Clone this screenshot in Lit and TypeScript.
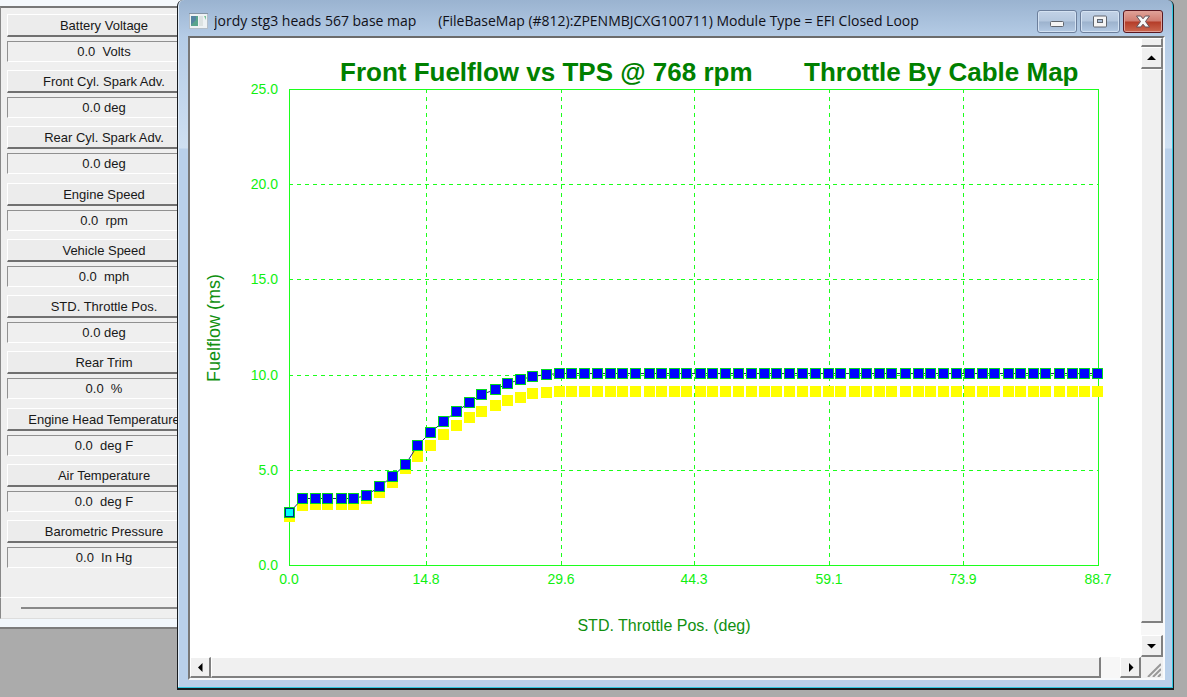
import { LitElement, html, css, svg } from "lit";
import { customElement, property } from "lit/decorators.js";

interface Reading {
  name: string;
  value: string;
}

const READINGS: Reading[] = [
  { name: "Battery Voltage", value: "0.0  Volts" },
  { name: "Front Cyl. Spark Adv.", value: "0.0 deg" },
  { name: "Rear Cyl. Spark Adv.", value: "0.0 deg" },
  { name: "Engine Speed", value: "0.0  rpm" },
  { name: "Vehicle Speed", value: "0.0  mph" },
  { name: "STD. Throttle Pos.", value: "0.0 deg" },
  { name: "Rear Trim", value: "0.0  %" },
  { name: "Engine Head Temperature", value: "0.0  deg F" },
  { name: "Air Temperature", value: "0.0  deg F" },
  { name: "Barometric Pressure", value: "0.0  In Hg" },
];

const POINTS = 64;
const fill = (values: number[]) =>
  Array.from({ length: POINTS }, (_, i) => values[Math.min(i, values.length - 1)]);

const CURRENT = fill([
  2.75, 3.47, 3.47, 3.47, 3.47, 3.47, 3.66, 4.13, 4.66, 5.3, 6.3, 6.95, 7.55, 8.07, 8.52, 8.93,
  9.24, 9.51, 9.72, 9.91, 9.98, 10.05,
]);
const BASE = fill([
  2.57, 3.15, 3.2, 3.2, 3.2, 3.2, 3.49, 3.83, 4.33, 5.09, 5.72, 6.3, 6.83, 7.35, 7.76, 8.07, 8.4,
  8.65, 8.81, 9.0, 9.07, 9.12,
]);

const PLOT = { left: 99, top: 51, width: 809, height: 476 };
const X_TICKS = [
  { label: "0.0", at: 0 },
  { label: "14.8", at: 137 },
  { label: "29.6", at: 272 },
  { label: "44.3", at: 405 },
  { label: "59.1", at: 540 },
  { label: "73.9", at: 674 },
  { label: "88.7", at: 809 },
];
const Y_TICKS = ["25.0", "20.0", "15.0", "10.0", "5.0", "0.0"];

const xAt = (i: number) =>
  Math.round(PLOT.left + 0.4 + Math.floor(i / 4) * 51.3 + (i % 4) * 12.6);
const yAt = (v: number) => Math.floor(PLOT.top + PLOT.height * (1 - v / 25));

@customElement("fuel-chart")
export class FuelChart extends LitElement {
  static styles = css`
    :host {
      display: block;
      min-width: 0;
      min-height: 0;
      background: #fff;
    }
    .chart {
      display: block;
      width: 100%;
      height: 100%;
      font-family: "Liberation Sans", Arial, sans-serif;
    }
    .title {
      font-size: 26px;
      font-weight: 700;
      fill: #008000;
    }
    .axis {
      font-size: 16px;
      fill: #109010;
    }
    .upright {
      font-size: 18px;
    }
    .tick {
      font-size: 14px;
      fill: #10f010;
    }
    .end {
      text-anchor: end;
    }
    .mid {
      text-anchor: middle;
    }
    .frame,
    .grid {
      fill: none;
      stroke: #1cff1c;
      stroke-width: 1;
      shape-rendering: crispEdges;
    }
    .grid {
      stroke-dasharray: 4 4;
    }
    .curve {
      fill: none;
      stroke: #202080;
      stroke-width: 1;
    }
    .base {
      fill: #ffff00;
      shape-rendering: crispEdges;
    }
    .edge {
      fill: #00d820;
      shape-rendering: crispEdges;
    }
    .dot {
      fill: #0000ff;
      shape-rendering: crispEdges;
    }
    .cursor {
      fill: #00ffff;
      stroke: #002c90;
      shape-rendering: crispEdges;
    }
  `;

  render() {
    const { left, top, width, height } = PLOT;
    const ys = Y_TICKS.map((_, i) => Math.round(top + (height * i) / 5));
    return html`<svg class="chart" viewBox="0 0 951 619" role="img" aria-label="Fuelflow chart">
      <text class="title" x="150" y="43">Front Fuelflow vs TPS @ 768 rpm</text>
      <text class="title" x="614" y="43">Throttle By Cable Map</text>
      ${ys.slice(1, 5).map(
        (y) => svg`<path class="grid" d="M${left} ${y + 0.5}H${left + width}" />`
      )}
      ${X_TICKS.slice(1, 6).map(
        (t) => svg`<path class="grid" d="M${left + t.at + 0.5} ${top}V${top + height}" />`
      )}
      <rect class="frame" x=${left + 0.5} y=${top + 0.5} width=${width} height=${height} />
      ${Y_TICKS.map((t, i) => svg`<text class="tick end" x="88" y=${ys[i] + 5}>${t}</text>`)}
      ${X_TICKS.map(
        (t) => svg`<text class="tick mid" x=${left + t.at} y="546">${t.label}</text>`
      )}
      <text class="axis mid" x="474" y="593">STD. Throttle Pos. (deg)</text>
      <text class="axis upright mid" transform="translate(30 290) rotate(-90)">Fuelflow (ms)</text>
      ${BASE.map(
        (v, i) =>
          svg`<rect class="base" x=${xAt(i) - 5} y=${yAt(v) - 5} width="11" height="11" />`
      )}
      <polyline
        class="curve"
        points=${CURRENT.map((v, i) => `${xAt(i) + 0.5},${yAt(v) + 0.5}`).join(" ")}
      />
      ${CURRENT.map(
        (v, i) => svg`
          <rect class="edge" x=${xAt(i) - 5} y=${yAt(v) - 5} width="11" height="11" />
          <rect class="dot" x=${xAt(i) - 4} y=${yAt(v) - 4} width="9" height="9" />`
      )}
      <rect
        class="cursor"
        x=${xAt(0) - 3.5}
        y=${yAt(CURRENT[0]) - 3.5}
        width="8"
        height="8"
      />
    </svg>`;
  }
}

@customElement("reading-panel")
export class ReadingPanel extends LitElement {
  @property({ attribute: false }) readings: Reading[] = [];

  static styles = css`
    :host {
      display: flex;
      flex-direction: column;
      box-sizing: border-box;
      border-top: 6px solid #f4f8fc;
      border-bottom: 2px solid #7c7c7c;
      background: #efefef;
      font: 13px/18px "Liberation Sans", Arial, sans-serif;
      color: #181818;
    }
    .list {
      flex: 1;
      display: flex;
      flex-direction: column;
      justify-content: space-between;
      border-top: 2px solid #787878;
      border-left: 1px solid #888;
      padding: 6px 8px 29px 6px;
    }
    .item {
      display: flex;
      flex-direction: column;
      gap: 4px;
    }
    .name,
    .value {
      box-sizing: border-box;
      text-align: center;
      white-space: pre;
    }
    .name {
      height: 23px;
      padding: 2px 0 0;
      border: 1px solid #fff;
      border-bottom: 2px solid #707070;
      background: #ececec;
      font: inherit;
      color: inherit;
    }
    .value {
      height: 21px;
      padding-top: 1px;
      border: 1px solid #fff;
      border-top-color: #909090;
      border-left-color: #909090;
    }
    .foot {
      height: 22px;
      box-sizing: border-box;
      padding: 9px 20px 0;
      border-top: 1px solid #fff;
      border-left: 1px solid #888;
      border-bottom: 1px solid #ddd;
    }
    .groove {
      height: 2px;
      background: #888;
    }
    .rim {
      height: 8px;
      background: #f2f7fc;
    }
  `;

  render() {
    return html`
      <div class="list">
        ${this.readings.map(
          (r) => html`<div class="item">
            <button class="name">${r.name}</button>
            <div class="value">${r.value}</div>
          </div>`
        )}
      </div>
      <div class="foot"><div class="groove"></div></div>
      <div class="rim"></div>
    `;
  }
}

@customElement("app-root")
export class AppRoot extends LitElement {
  static styles = css`
    :host {
      display: block;
      position: relative;
      height: 100vh;
      overflow: hidden;
      background: #ababab;
    }
    .panel {
      position: absolute;
      left: 0;
      top: 0;
      width: 209px;
      height: 629px;
    }
    .window {
      position: absolute;
      inset: 0 13px 7px 177px;
      display: flex;
      flex-direction: column;
      box-sizing: border-box;
      border: 1px solid #181c20;
      border-top: 0;
      border-bottom-width: 2px;
      border-radius: 6px 6px 0 0;
      padding: 0 8px 8px 10px;
      background: linear-gradient(#9ab3d0, #b5cce6 37px, #cfe0f2 148px, #b9d0ea 149px);
      box-shadow: inset -1px -1px #30c8e0, inset 1px 0 #e0ecf8;
    }
    .bar {
      flex: none;
      display: flex;
      align-items: center;
      gap: 6px;
      height: 36px;
      padding: 6px 2px 0 1px;
      box-sizing: border-box;
    }
    .logo {
      flex: none;
      width: 19px;
      height: 16px;
    }
    .caption {
      flex: 1;
      margin: 0;
      font: 400 14px/20px "Open Sans", "Noto Sans", sans-serif;
      color: #101018;
      white-space: pre;
      overflow: hidden;
    }
    .controls {
      display: flex;
      gap: 3px;
    }
    .control {
      display: grid;
      place-items: center;
      width: 40px;
      height: 23px;
      padding: 0;
      border: 1px solid #6c7f9c;
      border-radius: 3px;
      background: linear-gradient(#c2d2e6, #b4c7de 48%, #9cb2cd 52%, #b4cae4);
      box-shadow: inset 0 0 0 1px #d4e2f2;
    }
    .close {
      border-color: #5a1820;
      background: linear-gradient(#e0a298, #d07c70 48%, #b43c28 52%, #cc6850);
      box-shadow: inset 0 0 0 1px #e0a098;
    }
    .client {
      flex: 1;
      min-height: 0;
      display: grid;
      grid-template: minmax(0, 1fr) 21px / minmax(0, 1fr) 22px;
      border: 2px solid #f8fafc;
      border-top-color: #6c6c6c;
      border-left-color: #787878;
      background: #f0f0f0;
    }
    .scroll {
      display: flex;
      background: #f7f7f7;
    }
    .vertical {
      flex-direction: column;
    }
    .step,
    .thumb,
    .split {
      box-sizing: border-box;
      padding: 0;
      border: 1px solid #fff;
      border-right: 2px solid #808080;
      border-bottom: 2px solid #808080;
      background: #f0f0f0;
    }
    .step {
      flex: none;
      display: grid;
      place-items: center;
      width: 21px;
      height: 21px;
    }
    .vertical .step {
      width: 22px;
      height: 22px;
    }
    .split {
      height: 9px;
    }
    .thumb {
      flex: 1;
    }
    .vertical .track {
      height: 12px;
    }
    .horizontal .track {
      width: 19px;
    }
    .grip {
      width: 20px;
      height: 20px;
    }
  `;

  private arrow(d: string) {
    return html`<svg width="11" height="11" viewBox="0 0 11 11" aria-hidden="true">
      <path d=${d} fill="#000" />
    </svg>`;
  }

  render() {
    return html`
      <reading-panel class="panel" .readings=${READINGS}></reading-panel>
      <section class="window">
        <header class="bar">
          <svg class="logo" viewBox="0 0 19 16" aria-hidden="true">
            <rect x=".5" y=".5" width="18" height="15" fill="#eef2f4" stroke="#b4bec8" />
            <path d="M0 .5H19" stroke="#8494a4" />
            <rect x="2" y="3" width="7" height="10" fill="#58a48c" />
            <path d="M2 3h5v4l-5 5z" fill="#5484a0" />
            <path d="M10 3h4v10h-4z" fill="#dce2e2" />
            <path d="M15 3h2v4z" fill="#78c498" />
          </svg>
          <h1 class="caption">jordy stg3 heads 567 base map      (FileBaseMap (#812):ZPENMBJCXG100711) Module Type = EFI Closed Loop</h1>
          <div class="controls">
            <button class="control" aria-label="Minimize">
              <svg width="16" height="13" viewBox="0 0 16 13">
                <rect x="1.5" y="6.5" width="13" height="5" rx="1" fill="#f4f4f4" stroke="#60656e" />
              </svg>
            </button>
            <button class="control" aria-label="Restore">
              <svg width="16" height="13" viewBox="0 0 16 13">
                <rect x="1.5" y="1" width="13" height="11" rx="1" fill="#f4f4f4" stroke="#60656e" />
                <rect x="5.5" y="4.5" width="5" height="3" fill="#a8bcd6" stroke="#60656e" />
              </svg>
            </button>
            <button class="control close" aria-label="Close">
              <svg width="16" height="13" viewBox="0 0 16 13">
                <path
                  d="M1.5 1h4.2L8 3.800 10.300 1h4.200l-4 5.500 4 5.500h-4.200L8 9.200 5.700 12H1.500l4-5.500z"
                  fill="#f8f8f8"
                  stroke="#605058"
                />
              </svg>
            </button>
          </div>
        </header>
        <div class="client">
          <fuel-chart></fuel-chart>
          <div class="scroll vertical">
            <div class="split"></div>
            <button class="step" aria-label="Scroll up">${this.arrow("M1 8h9L5.5 3.5z")}</button>
            <div class="thumb"></div>
            <div class="track"></div>
            <button class="step" aria-label="Scroll down">${this.arrow("M1 4h9L5.5 8.5z")}</button>
          </div>
          <div class="scroll horizontal">
            <button class="step" aria-label="Scroll left">${this.arrow("M7.5 1v9L3 5.5z")}</button>
            <div class="thumb"></div>
            <div class="track"></div>
            <button class="step" aria-label="Scroll right">${this.arrow("M4 1v9l4.5-4.5z")}</button>
          </div>
          <svg class="grip" viewBox="0 0 20 20" aria-hidden="true">
            <path d="M7 20L20 7M12 20l8-8M17 20l3-3" stroke="#989898" stroke-width="2" />
          </svg>
        </div>
      </section>
    `;
  }
}
